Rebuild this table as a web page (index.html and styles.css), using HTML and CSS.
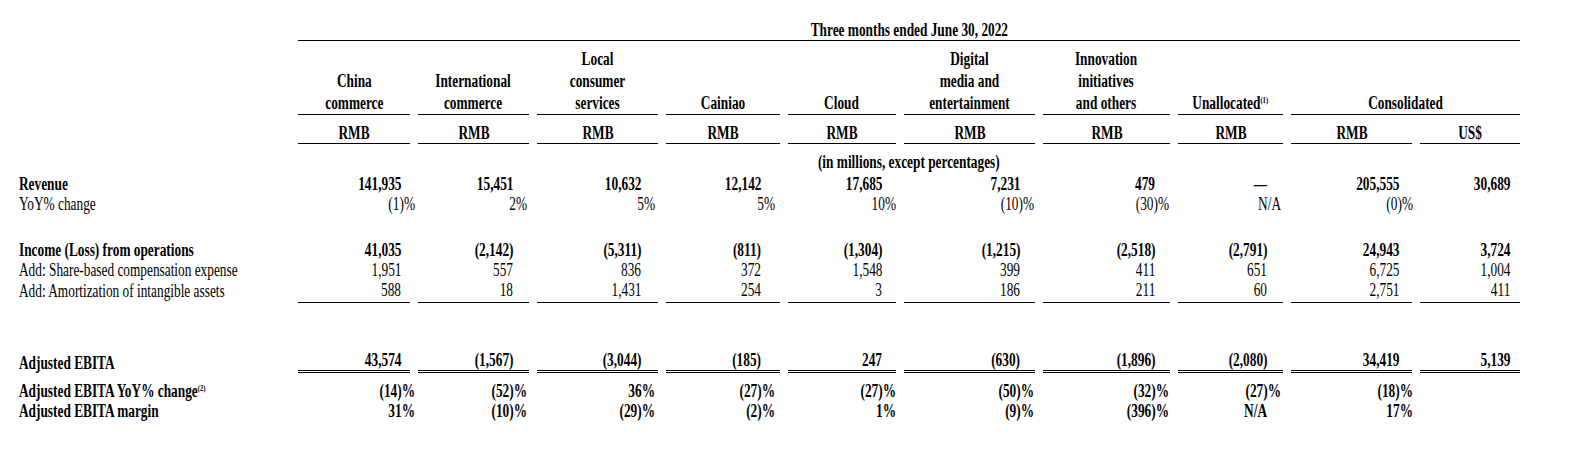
FILE: index.html
```html
<!DOCTYPE html>
<html lang="en">
<head>
<meta charset="utf-8">
<title>Segment results</title>
<link rel="stylesheet" href="styles.css">
</head>
<body>
<table class="fin">
  <colgroup>
    <col class="c-label">
    <col class="c1"><col class="c2"><col class="c3"><col class="c4"><col class="c5">
    <col class="c6"><col class="c7"><col class="c8"><col class="c9"><col class="c10">
  </colgroup>
  <tr class="r-title">
    <td></td>
    <td colspan="10" class="title"><span class="t">Three months ended June 30, 2022</span></td>
  </tr>
  <tr class="r-head">
    <td></td>
    <td class="h"><span class="t">China<br>commerce</span></td>
    <td class="h"><span class="t">International<br>commerce</span></td>
    <td class="h"><span class="t">Local<br>consumer<br>services</span></td>
    <td class="h"><span class="t">Cainiao</span></td>
    <td class="h"><span class="t">Cloud</span></td>
    <td class="h"><span class="t">Digital<br>media and<br>entertainment</span></td>
    <td class="h"><span class="t">Innovation<br>initiatives<br>and others</span></td>
    <td class="h"><span class="t">Unallocated<sup>(1)</sup></span></td>
    <td class="h" colspan="2"><span class="t">Consolidated</span></td>
  </tr>
  <tr class="r-cur">
    <td></td>
    <td class="h"><span class="t">RMB</span></td><td class="h"><span class="t">RMB</span></td><td class="h"><span class="t">RMB</span></td>
    <td class="h"><span class="t">RMB</span></td><td class="h"><span class="t">RMB</span></td><td class="h"><span class="t">RMB</span></td>
    <td class="h"><span class="t">RMB</span></td><td class="h"><span class="t">RMB</span></td><td class="h"><span class="t">RMB</span></td>
    <td class="h"><span class="t">US$</span></td>
  </tr>
  <tr class="r-unit">
    <td></td>
    <td colspan="10" class="unit"><span class="t">(in millions, except percentages)</span></td>
  </tr>
  <tr class="r-rev bold">
    <td class="lbl"><span class="t">Revenue</span></td>
    <td class="n"><span class="t">141,935</span></td><td class="n"><span class="t">15,451</span></td><td class="n"><span class="t">10,632</span></td>
    <td class="n"><span class="t">12,142</span></td><td class="n"><span class="t">17,685</span></td><td class="n"><span class="t">7,231</span></td>
    <td class="n"><span class="t">479</span></td><td class="n"><span class="t">—</span></td><td class="n"><span class="t">205,555</span></td>
    <td class="n"><span class="t">30,689</span></td>
  </tr>
  <tr class="r-yoy">
    <td class="lbl"><span class="t">YoY% change</span></td>
    <td class="n"><span class="t p">(1)%</span></td><td class="n"><span class="t p">2%</span></td><td class="n"><span class="t p">5%</span></td>
    <td class="n"><span class="t p">5%</span></td><td class="n"><span class="t p">10%</span></td><td class="n"><span class="t p">(10)%</span></td>
    <td class="n"><span class="t p">(30)%</span></td><td class="n"><span class="t p">N/A</span></td><td class="n"><span class="t p">(0)%</span></td>
    <td class="n"></td>
  </tr>
  <tr class="r-inc bold">
    <td class="lbl"><span class="t">Income (Loss) from operations</span></td>
    <td class="n"><span class="t">41,035</span></td><td class="n"><span class="t">(2,142)</span></td><td class="n"><span class="t">(5,311)</span></td>
    <td class="n"><span class="t">(811)</span></td><td class="n"><span class="t">(1,304)</span></td><td class="n"><span class="t">(1,215)</span></td>
    <td class="n"><span class="t">(2,518)</span></td><td class="n"><span class="t">(2,791)</span></td><td class="n"><span class="t">24,943</span></td>
    <td class="n"><span class="t">3,724</span></td>
  </tr>
  <tr class="r-sbc">
    <td class="lbl"><span class="t">Add: Share-based compensation expense</span></td>
    <td class="n"><span class="t">1,951</span></td><td class="n"><span class="t">557</span></td><td class="n"><span class="t">836</span></td>
    <td class="n"><span class="t">372</span></td><td class="n"><span class="t">1,548</span></td><td class="n"><span class="t">399</span></td>
    <td class="n"><span class="t">411</span></td><td class="n"><span class="t">651</span></td><td class="n"><span class="t">6,725</span></td>
    <td class="n"><span class="t">1,004</span></td>
  </tr>
  <tr class="r-amo">
    <td class="lbl"><span class="t">Add: Amortization of intangible assets</span></td>
    <td class="n"><span class="t">588</span></td><td class="n"><span class="t">18</span></td><td class="n"><span class="t">1,431</span></td>
    <td class="n"><span class="t">254</span></td><td class="n"><span class="t">3</span></td><td class="n"><span class="t">186</span></td>
    <td class="n"><span class="t">211</span></td><td class="n"><span class="t">60</span></td><td class="n"><span class="t">2,751</span></td>
    <td class="n"><span class="t">411</span></td>
  </tr>
  <tr class="r-ebita bold">
    <td class="lbl"><span class="t">Adjusted EBITA</span></td>
    <td class="n"><span class="t">43,574</span></td><td class="n"><span class="t">(1,567)</span></td><td class="n"><span class="t">(3,044)</span></td>
    <td class="n"><span class="t">(185)</span></td><td class="n"><span class="t">247</span></td><td class="n"><span class="t">(630)</span></td>
    <td class="n"><span class="t">(1,896)</span></td><td class="n"><span class="t">(2,080)</span></td><td class="n"><span class="t">34,419</span></td>
    <td class="n"><span class="t">5,139</span></td>
  </tr>
  <tr class="r-eyoy bold">
    <td class="lbl"><span class="t">Adjusted EBITA YoY% change<sup>(2)</sup></span></td>
    <td class="n"><span class="t p">(14)%</span></td><td class="n"><span class="t p">(52)%</span></td><td class="n"><span class="t p">36%</span></td>
    <td class="n"><span class="t p">(27)%</span></td><td class="n"><span class="t p">(27)%</span></td><td class="n"><span class="t p">(50)%</span></td>
    <td class="n"><span class="t p">(32)%</span></td><td class="n"><span class="t p">(27)%</span></td><td class="n"><span class="t p">(18)%</span></td>
    <td class="n"></td>
  </tr>
  <tr class="r-margin bold">
    <td class="lbl"><span class="t">Adjusted EBITA margin</span></td>
    <td class="n"><span class="t p">31%</span></td><td class="n"><span class="t p">(10)%</span></td><td class="n"><span class="t p">(29)%</span></td>
    <td class="n"><span class="t p">(2)%</span></td><td class="n"><span class="t p">1%</span></td><td class="n"><span class="t p">(9)%</span></td>
    <td class="n"><span class="t p">(396)%</span></td><td class="n"><span class="t">N/A</span></td><td class="n"><span class="t p">17%</span></td>
    <td class="n"></td>
  </tr>
</table>
</body>
</html>
```
FILE: styles.css
```css
html, body {
  margin: 0;
  padding: 0;
  background: #ffffff;
}
body {
  padding-top: 20px;
  color: #000;
  font-family: "Liberation Serif", "Times New Roman", serif;
  font-size: 18px;
}
.fin {
  table-layout: fixed;
  width: 1528px;
  border-collapse: separate;
  border-spacing: 8px 0;
}
.fin td {
  padding: 0;
  line-height: 20px;
  white-space: nowrap;
  vertical-align: bottom;
}
.c-label { width: 282px; }
.c1 { width: 112px; }
.c2 { width: 111px; }
.c3 { width: 121px; }
.c4 { width: 114px; }
.c5 { width: 108px; }
.c6 { width: 131px; }
.c7 { width: 127px; }
.c8 { width: 105px; }
.c9 { width: 121px; }
.c10 { width: 100px; }

/* condensed type: the source face is a narrow Times */
.t {
  display: inline-block;
  transform: scaleX(0.74);
}
.n .t { transform-origin: 100% 50%; }
.lbl .t { transform-origin: 0 50%; }
.h .t, .title .t, .unit .t {
  transform-origin: 50% 50%;
  margin: 0 -20px;
}
.t.p { margin-right: -14px; }

.bold td { font-weight: bold; }

.title {
  text-align: center;
  font-weight: bold;
  border-bottom: 1px solid #000;
}
.r-head td { padding-top: 7px; }
.r-head .h {
  line-height: 22px;
  text-align: center;
  font-weight: bold;
  border-bottom: 1px solid #000;
}
.r-cur td { padding-top: 8px; }
.r-cur .h {
  text-align: center;
  font-weight: bold;
  border-bottom: 1px solid #000;
}
.r-unit td { padding-top: 8px; }
.unit {
  text-align: center;
  font-weight: bold;
}
.r-rev td { padding-top: 2px; }
.r-inc td { padding-top: 26px; }
.r-amo td { padding-bottom: 2px; }
.r-amo .n { border-bottom: 1px solid #000; }
.r-ebita td { padding-top: 47px; }
.r-ebita .n { border-bottom: 3px double #000; }
.r-eyoy td { padding-top: 8px; }

.fin td.lbl {
  padding-left: 11px;
  text-align: left;
}
.n { text-align: right; }
.fin td.n:nth-child(2) { padding-right: 9px; }
.fin td.n:nth-child(3) { padding-right: 16px; }
.fin td.n:nth-child(4) { padding-right: 17px; }
.fin td.n:nth-child(5) { padding-right: 19px; }
.fin td.n:nth-child(6) { padding-right: 14px; }
.fin td.n:nth-child(7) { padding-right: 15px; }
.fin td.n:nth-child(8) { padding-right: 15px; }
.fin td.n:nth-child(9) { padding-right: 16px; }
.fin td.n:nth-child(10) { padding-right: 13px; }
.fin td.n:nth-child(11) { padding-right: 10px; }

sup {
  font-size: 9px;
  line-height: 0;
  vertical-align: 6px;
  font-weight: bold;
}
```
